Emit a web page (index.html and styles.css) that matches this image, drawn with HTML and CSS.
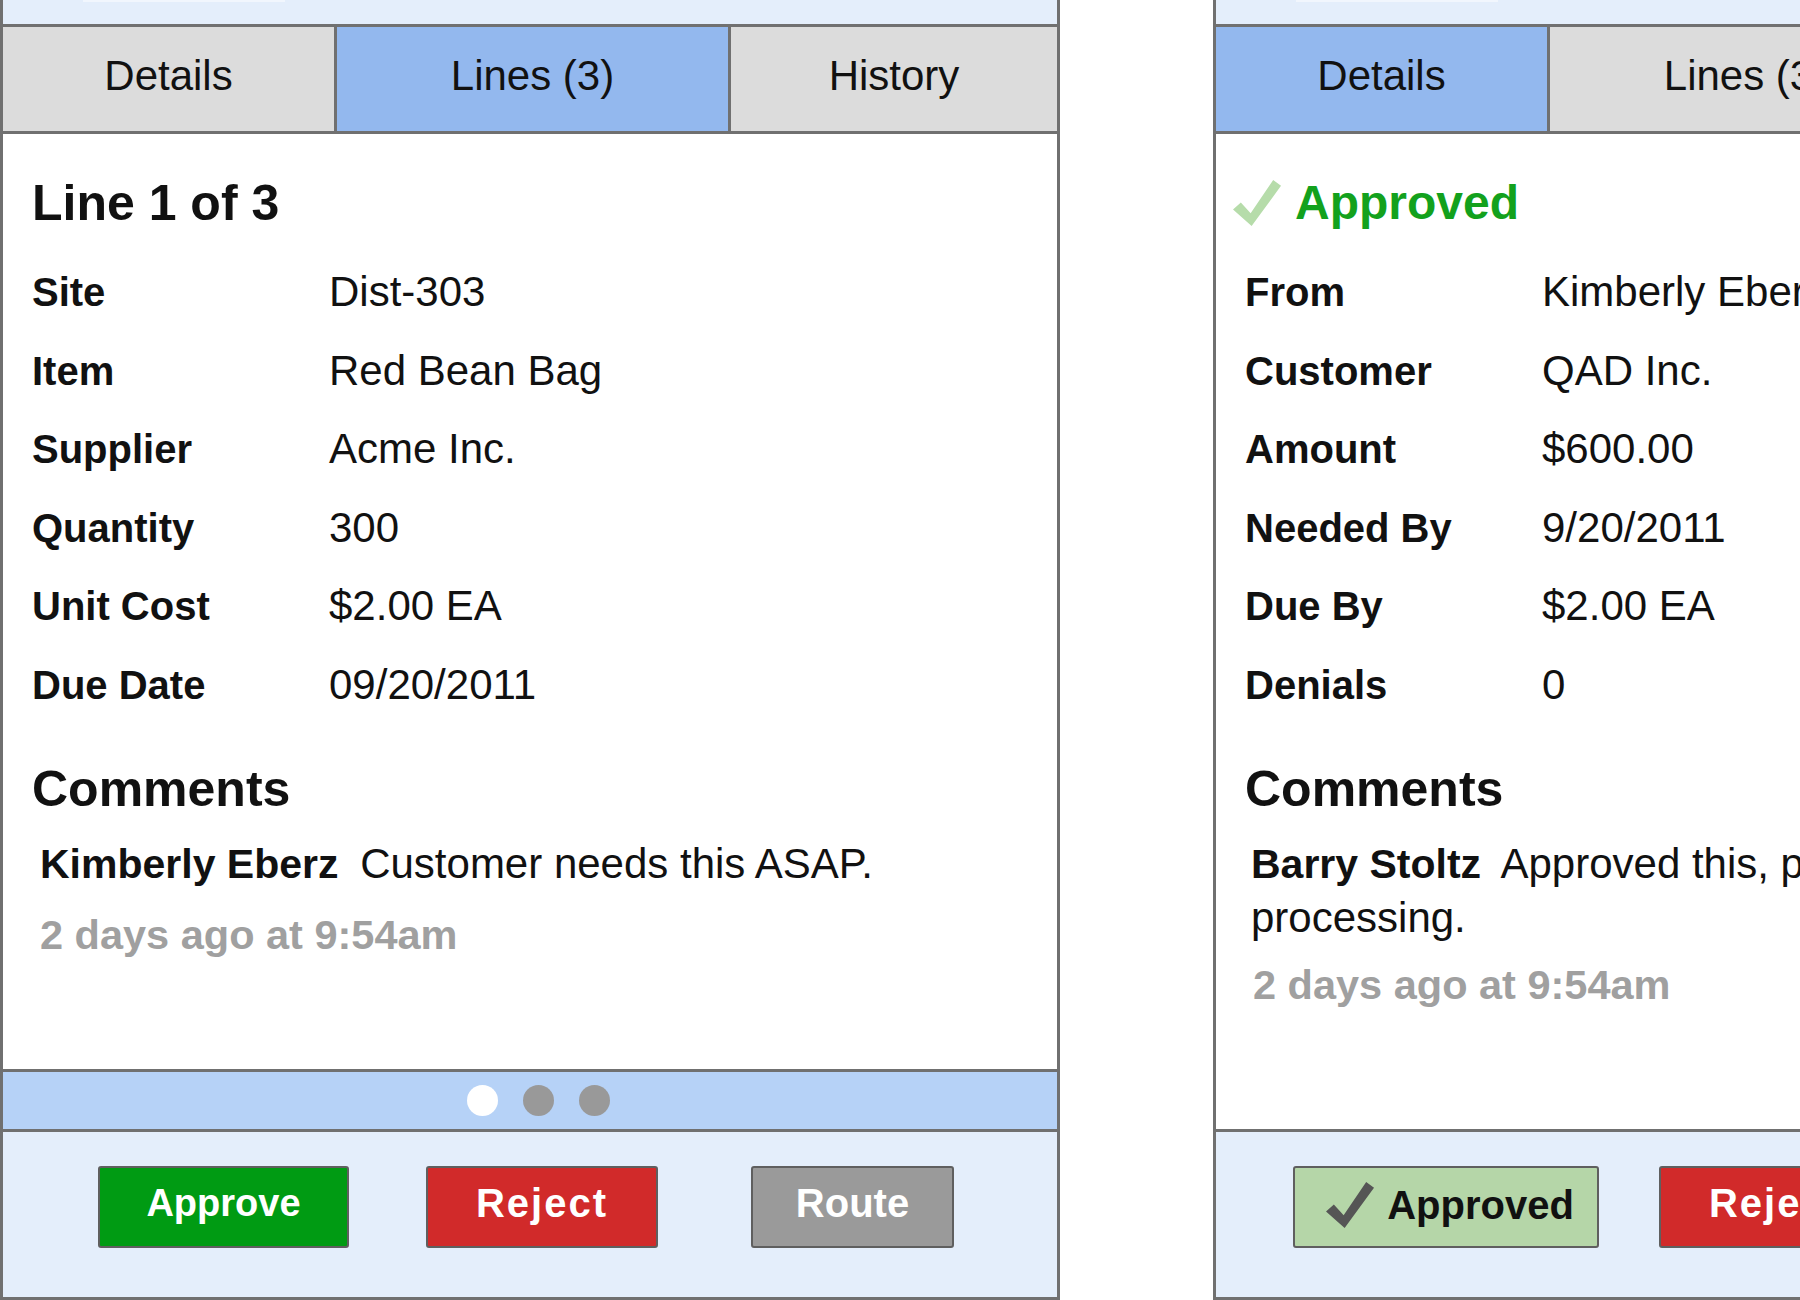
FILE: index.html
```html
<!DOCTYPE html>
<html lang="en">
<head>
<meta charset="utf-8">
<title>Approvals</title>
<link rel="stylesheet" href="styles.css">
</head>
<body>
<div class="stage">
  <section class="phone">
    <div class="topbar"><div class="field-edge"></div></div>
    <nav class="tabs">
      <div class="tab tab-first">Details</div>
      <div class="tab tab-mid active">Lines (3)</div>
      <div class="tab tab-last">History</div>
    </nav>
    <div class="content">
      <h1 class="title">Line 1 of 3</h1>
      <dl class="fields">
        <dt>Site</dt><dd>Dist-303</dd>
        <dt>Item</dt><dd>Red Bean Bag</dd>
        <dt>Supplier</dt><dd>Acme Inc.</dd>
        <dt>Quantity</dt><dd>300</dd>
        <dt>Unit Cost</dt><dd>$2.00 EA</dd>
        <dt>Due Date</dt><dd>09/20/2011</dd>
      </dl>
      <h2 class="comments-title">Comments</h2>
      <p class="comment"><b class="author">Kimberly Eberz</b> Customer needs this ASAP.</p>
      <p class="stamp">2 days ago at 9:54am</p>
    </div>
    <div class="pager">
      <span class="dot on"></span><span class="dot"></span><span class="dot"></span>
    </div>
    <div class="actions">
      <button class="btn btn-approve">Approve</button>
      <button class="btn btn-reject">Reject</button>
      <button class="btn btn-route">Route</button>
    </div>
  </section>

  <section class="phone">
    <div class="topbar"><div class="field-edge"></div></div>
    <nav class="tabs">
      <div class="tab tab-first active">Details</div>
      <div class="tab tab-mid">Lines (3)</div>
      <div class="tab tab-last">History</div>
    </nav>
    <div class="content">
      <h1 class="title title-approved">
        <svg class="check check-light" viewBox="0 0 50 50" aria-hidden="true"><path d="M0 31 L8 24 L18 35 L41 1 L49 7 L19 48 Z"/></svg>
        <span>Approved</span>
      </h1>
      <dl class="fields">
        <dt>From</dt><dd>Kimberly Eberz</dd>
        <dt>Customer</dt><dd>QAD Inc.</dd>
        <dt>Amount</dt><dd>$600.00</dd>
        <dt>Needed By</dt><dd>9/20/2011</dd>
        <dt>Due By</dt><dd>$2.00 EA</dd>
        <dt>Denials</dt><dd>0</dd>
      </dl>
      <h2 class="comments-title">Comments</h2>
      <p class="comment comment-wrap"><b class="author">Barry Stoltz</b> Approved this, please continue<br>processing.</p>
      <p class="stamp stamp-after-wrap">2 days ago at 9:54am</p>
    </div>
    <div class="actions">
      <button class="btn btn-approved">
        <svg class="check check-dark" viewBox="0 0 50 50" aria-hidden="true"><path d="M0 31 L8 24 L18 35 L41 1 L49 7 L19 48 Z"/></svg>
        <span>Approved</span>
      </button>
      <button class="btn btn-reject btn-reject-alt">Reject</button>
    </div>
  </section>
</div>
</body>
</html>
```

FILE: styles.css
```css
* {
  box-sizing: border-box;
  margin: 0;
  padding: 0;
}

html, body {
  width: 1800px;
  height: 1300px;
  overflow: hidden;
  background: #ffffff;
}

body {
  font-family: "Liberation Sans", Arial, sans-serif;
  color: #111111;
}

.stage {
  display: flex;
  gap: 153px;
  width: 1800px;
  height: 1300px;
}

.phone {
  flex: 0 0 1060px;
  width: 1060px;
  height: 1300px;
  display: flex;
  flex-direction: column;
  border: 3px solid #707070;
  border-top: 0;
}

.topbar {
  height: 24px;
  flex: 0 0 24px;
  background: #e4eefb;
}

.field-edge {
  margin-left: 80px;
  width: 202px;
  height: 2px;
  background: #f1f6fd;
}

.tabs {
  display: flex;
  flex: 0 0 110px;
  height: 110px;
  border-top: 3px solid #707070;
  border-bottom: 3px solid #707070;
}

.tab {
  display: flex;
  align-items: center;
  justify-content: center;
  background: #dcdcdc;
  font-size: 42px;
  padding-bottom: 7px;
  color: #111;
}

.tab + .tab {
  border-left: 3px solid #707070;
}

.tab-first { width: 331px; }
.tab-mid { width: 394px; }
.tab-last { width: 329px; }

.tab.active {
  background: #93b8ee;
}

.content {
  flex: 1 1 auto;
  background: #ffffff;
  padding: 41px 29px 0;
  overflow: hidden;
}

.title {
  font-size: 50px;
  font-weight: bold;
  line-height: 56px;
  margin-bottom: 22px;
}

.title-approved {
  display: flex;
  align-items: center;
  margin-left: -12px;
  font-size: 48px;
  color: #13a11d;
}

.check {
  display: block;
  flex: 0 0 auto;
}

.check-light {
  width: 49px;
  height: 49px;
  fill: #b6dcaa;
  margin-right: 13px;
}

.fields {
  display: grid;
  grid-template-columns: 297px 1fr;
  line-height: 78.6px;
}

.fields dt {
  font-size: 40px;
  font-weight: bold;
}

.fields dd {
  font-size: 42px;
  margin: 0;
}

.comments-title {
  font-size: 50px;
  font-weight: bold;
  line-height: 60px;
  margin-top: 34px;
}

.comment {
  font-size: 42px;
  line-height: 54px;
  margin-top: 18px;
  padding-left: 8px;
}

.comment-wrap {
  padding-left: 6px;
}

.author {
  font-size: 41px;
  font-weight: bold;
  margin-right: 10px;
}

.stamp {
  font-size: 41.5px;
  font-weight: bold;
  line-height: 54px;
  margin-top: 17px;
  padding-left: 8px;
  color: #a0a0a0;
}

.stamp-after-wrap {
  margin-top: 13px;
}

.pager {
  flex: 0 0 60px;
  height: 60px;
  display: flex;
  align-items: center;
  justify-content: center;
  gap: 25px;
  padding-left: 17px;
  background: #b6d2f7;
  border-top: 3px solid #707070;
}

.dot {
  width: 31px;
  height: 31px;
  border-radius: 50%;
  background: #999999;
}

.dot.on {
  background: #ffffff;
}

.actions {
  flex: 0 0 168px;
  height: 168px;
  display: flex;
  align-items: flex-start;
  padding-top: 34px;
  background: #e4eefb;
  border-top: 3px solid #707070;
}

.btn {
  display: flex;
  align-items: center;
  justify-content: center;
  height: 82px;
  padding-bottom: 8px;
  border: 2px solid #5f5f5f;
  border-radius: 3px;
  font-family: "Liberation Sans", Arial, sans-serif;
  font-size: 40px;
  font-weight: bold;
  color: #ffffff;
  flex: 0 0 auto;
}

.btn-approve {
  width: 251px;
  margin-left: 95px;
  background: #009b13;
  font-size: 38px;
}

.btn-reject {
  width: 232px;
  margin-left: 77px;
  background: #d12a2a;
  letter-spacing: 2px;
}

.btn-route {
  width: 203px;
  margin-left: 93px;
  background: #9a9a9a;
}

.btn-approved {
  width: 306px;
  margin-left: 77px;
  background: #b5d6a8;
  color: #111111;
  padding-bottom: 4px;
  padding-left: 8px;
}

.btn-reject-alt {
  margin-left: 60px;
}

.check-dark {
  width: 49px;
  height: 49px;
  fill: #555555;
  margin-right: 12px;
}
```
